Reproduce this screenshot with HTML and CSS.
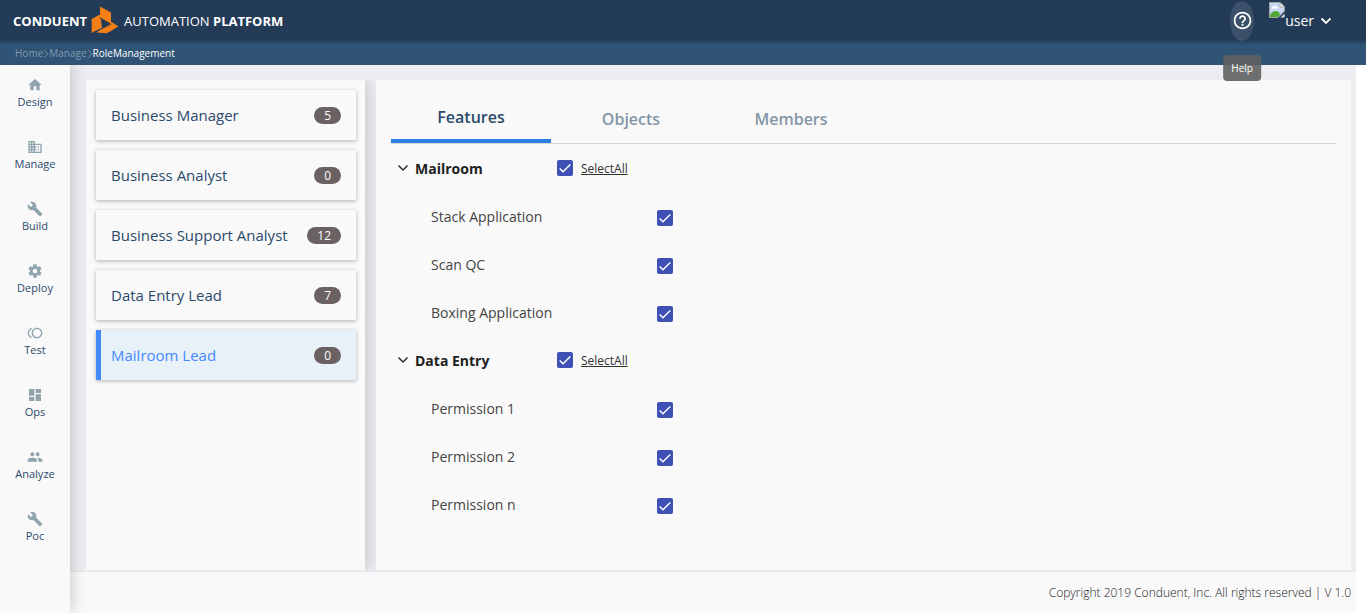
FILE: index.html
```html
<!DOCTYPE html>
<html lang="en">
<head>
<meta charset="utf-8">
<title>Role Management</title>
<link rel="stylesheet" href="styles.css">
</head>
<body>
<header class="topbar">
  <a class="brand" href="#">
    <span class="brand-name">CONDUENT</span>
    <svg class="brand-mark" viewBox="0 0 28 28" aria-hidden="true">
      <g fill="#f57f17"><path d="M9 .5 20 6.500V18L9 11.500z"/><path d="M.7 13 9 8.500V12.500L11 14V22L.7 27z"/><path d="M11 22.500 20.500 16 27.500 20.500 16 27.300 5.500 26.500z"/></g>
      <path d="M9 12 20 18.300 11 22.500 2 26.500" fill="none" stroke="#233b57" stroke-width=".8"/>
      <path d="M10 13.500 19 18 11 22.500z" fill="#233b57"/>
    </svg>
    <span class="product">AUTOMATION <b>PLATFORM</b></span>
  </a>
  <div class="tools">
    <div class="help">
      <button class="help-button" type="button" aria-label="Help" aria-describedby="help-tip">
        <svg viewBox="0 0 24 24" width="21" height="21" fill="#fff" aria-hidden="true"><path d="M11 18h2v-2h-2v2zm1-16C6.480 2 2 6.480 2 12s4.480 10 10 10 10-4.480 10-10S17.520 2 12 2zm0 18c-4.410 0-8-3.590-8-8s3.590-8 8-8 8 3.590 8 8-3.590 8-8 8zm0-14c-2.210 0-4 1.790-4 4h2c0-1.100.9-2 2-2s2 .9 2 2c0 2-3 1.750-3 5h2c0-2.250 3-2.500 3-5 0-2.210-1.790-4-4-4z"/></svg>
      </button>
      <span class="tooltip" id="help-tip" role="tooltip">Help</span>
    </div>
    <button class="user" type="button">
      <svg class="avatar" viewBox="0 0 16 16" aria-hidden="true">
        <path d="M.5.5H11L15.500 5V9L9 15.500H.5z" fill="#c4d8f5" stroke="#a5a5a5"/>
        <path d="M11 .5V5H15.500z" fill="#fff" stroke="#a5a5a5"/>
        <path d="M3 6c0-1 1-1.500 1.500-1.300C5 3 7 3 7.500 4.500 9 4.500 9 6 8.500 6.500H3z" fill="#fff"/>
        <path d="M1 13c2-4 6-5 9-3l1 3-2 2H1z" fill="#4fa834"/>
        <path d="M15.500 11.500V15.500H11.500z" fill="#ddd"/>
      </svg>
      <span>user</span>
      <svg class="caret" viewBox="0 0 12 8" width="12" height="8" aria-hidden="true"><path d="M1.500 1.500 6 6l4.500-4.500" fill="none" stroke="#fff" stroke-width="1.800"/></svg>
    </button>
  </div>
</header>
<nav class="crumbs" aria-label="Breadcrumb">
  <a href="#">Home</a><svg viewBox="0 0 6 10" width="6" height="10"><path d="M1 2l4 4-4 4"/></svg><a href="#">Manage</a><svg viewBox="0 0 6 10" width="6" height="10"><path d="M1 2l4 4-4 4"/></svg><span>RoleManagement</span>
</nav>
<div class="shell">
  <nav class="sidebar" aria-label="Main">
    <a href="#"><svg viewBox="0 0 24 24"><path d="M10 20v-6h4v6h5v-8h3L12 3 2 12h3v8z"/></svg>Design</a>
    <a href="#"><svg viewBox="0 0 24 24"><path d="M12 7V3H2v18h20V7H12zM6 19H4v-2h2v2zm0-4H4v-2h2v2zm0-4H4V9h2v2zm0-4H4V5h2v2zm4 12H8v-2h2v2zm0-4H8v-2h2v2zm0-4H8V9h2v2zm0-4H8V5h2v2zm10 12h-8v-2h2v-2h-2v-2h2v-2h-2V9h8v10zm-2-8h-2v2h2v-2zm0 4h-2v2h2v-2z"/></svg>Manage</a>
    <a href="#"><svg viewBox="0 0 24 24"><path d="M22.700 19l-9.100-9.100c.9-2.300.4-5-1.500-6.900-2-2-5-2.400-7.400-1.300L9 6 6 9 1.600 4.700C.4 7.100.9 10.100 2.900 12.100c1.900 1.900 4.600 2.400 6.900 1.500l9.100 9.100c.4.400 1 .4 1.400 0l2.300-2.300c.5-.4.5-1.100.1-1.400z"/></svg>Build</a>
    <a href="#"><svg viewBox="0 0 24 24"><path d="M19.430 12.980c.04-.32.070-.64.070-.98s-.03-.66-.07-.98l2.110-1.650c.19-.15.240-.42.120-.64l-2-3.460c-.12-.22-.39-.3-.61-.22l-2.490 1c-.52-.4-1.080-.73-1.690-.98l-.38-2.650C14.460 2.180 14.250 2 14 2h-4c-.25 0-.46.180-.49.420l-.38 2.650c-.61.250-1.170.59-1.690.98l-2.490-1c-.23-.09-.49 0-.61.220l-2 3.460c-.13.220-.07.490.12.640l2.110 1.650c-.04.320-.07.650-.07.980s.03.660.07.980l-2.110 1.650c-.19.150-.24.420-.12.640l2 3.460c.12.220.39.300.61.220l2.490-1c.52.400 1.080.730 1.690.980l.38 2.650c.03.240.24.420.49.420h4c.25 0 .46-.18.490-.42l.38-2.650c.61-.25 1.170-.59 1.690-.98l2.490 1c.23.090.49 0 .61-.22l2-3.460c.12-.22.070-.49-.12-.64l-2.110-1.650zM12 15.500c-1.930 0-3.500-1.570-3.500-3.500s1.570-3.500 3.500-3.500 3.500 1.570 3.500 3.500-1.570 3.500-3.500 3.500z"/></svg>Deploy</a>
    <a href="#"><svg viewBox="0 0 24 24"><path d="M15 4c-4.420 0-8 3.580-8 8s3.580 8 8 8 8-3.580 8-8-3.580-8-8-8zm0 14c-3.310 0-6-2.690-6-6s2.690-6 6-6 6 2.690 6 6-2.690 6-6 6zM3 12c0-2.610 1.670-4.830 4-5.650V4.260C3.550 5.150 1 8.270 1 12s2.550 6.850 6 7.740v-2.090c-2.330-.82-4-3.040-4-5.650z"/></svg>Test</a>
    <a href="#"><svg viewBox="0 0 24 24"><path d="M3 13h8V3H3v10zm0 8h8v-6H3v6zm10 0h8V11h-8v10zm0-18v6h8V3h-8z"/></svg>Ops</a>
    <a href="#"><svg viewBox="0 0 24 24"><path d="M16 11c1.660 0 2.990-1.340 2.990-3S17.660 5 16 5s-3 1.340-3 3 1.340 3 3 3zm-8 0c1.660 0 2.990-1.340 2.990-3S9.660 5 8 5 5 6.340 5 8s1.340 3 3 3zm0 2c-2.330 0-7 1.170-7 3.500V19h14v-2.500c0-2.330-4.670-3.500-7-3.500zm8 0c-.29 0-.62.020-.97.050 1.160.84 1.970 1.970 1.970 3.450V19h6v-2.500c0-2.330-4.670-3.500-7-3.500z"/></svg>Analyze</a>
    <a href="#"><svg viewBox="0 0 24 24"><path d="M22.700 19l-9.100-9.100c.9-2.300.4-5-1.500-6.900-2-2-5-2.400-7.400-1.300L9 6 6 9 1.600 4.700C.4 7.100.9 10.100 2.900 12.100c1.900 1.900 4.600 2.400 6.900 1.500l9.100 9.100c.4.400 1 .4 1.400 0l2.300-2.300c.5-.4.5-1.100.1-1.400z"/></svg>Poc</a>
  </nav>
  <div class="page">
    <main class="workspace">
      <section class="roles" aria-label="Roles">
        <button class="role" type="button"><span>Business Manager</span><span class="count">5</span></button>
        <button class="role" type="button"><span>Business Analyst</span><span class="count">0</span></button>
        <button class="role" type="button"><span>Business Support Analyst</span><span class="count">12</span></button>
        <button class="role" type="button"><span>Data Entry Lead</span><span class="count">7</span></button>
        <button class="role selected" type="button"><span>Mailroom Lead</span><span class="count">0</span></button>
      </section>
      <section class="details">
        <div class="tabs" role="tablist">
          <button class="tab active" role="tab" aria-selected="true" type="button">Features</button>
          <button class="tab" role="tab" aria-selected="false" type="button">Objects</button>
          <button class="tab" role="tab" aria-selected="false" type="button">Members</button>
        </div>
        <div class="group">
          <div class="group-head">
            <button class="toggle" type="button" aria-expanded="true"><svg viewBox="0 0 12 8" width="12" height="8"><path d="M1.500 1.500 6 6l4.500-4.500"/></svg>Mailroom</button>
            <label class="select-all"><input class="check" type="checkbox" checked><span>SelectAll</span></label>
          </div>
          <div class="feature"><label for="f1">Stack Application</label><input class="check" id="f1" type="checkbox" checked></div>
          <div class="feature"><label for="f2">Scan QC</label><input class="check" id="f2" type="checkbox" checked></div>
          <div class="feature"><label for="f3">Boxing Application</label><input class="check" id="f3" type="checkbox" checked></div>
        </div>
        <div class="group">
          <div class="group-head">
            <button class="toggle" type="button" aria-expanded="true"><svg viewBox="0 0 12 8" width="12" height="8"><path d="M1.500 1.500 6 6l4.500-4.500"/></svg>Data Entry</button>
            <label class="select-all"><input class="check" type="checkbox" checked><span>SelectAll</span></label>
          </div>
          <div class="feature"><label for="f4">Permission 1</label><input class="check" id="f4" type="checkbox" checked></div>
          <div class="feature"><label for="f5">Permission 2</label><input class="check" id="f5" type="checkbox" checked></div>
          <div class="feature"><label for="f6">Permission n</label><input class="check" id="f6" type="checkbox" checked></div>
        </div>
      </section>
    </main>
    <footer class="footer">Copyright 2019 Conduent, Inc. All rights reserved | V 1.0</footer>
  </div>
</div>
</body>
</html>
```
FILE: styles.css
```css
* { box-sizing: border-box; }
body {
  margin: 0;
  min-height: 100vh;
  display: flex;
  flex-direction: column;
  background: #fff;
  color: #212121;
  font-family: "Open Sans", sans-serif;
  font-size: 14px;
}
button { font: inherit; color: inherit; border: 0; padding: 0; background: none; }
a { color: inherit; text-decoration: none; }

.topbar {
  height: 41px;
  display: flex;
  align-items: center;
  justify-content: space-between;
  padding: 0 34px 0 13px;
  background: #233b57;
  color: #fff;
  box-shadow: 0 1px 3px rgba(0, 0, 0, .3);
  position: relative;
}
.brand { display: flex; align-items: center; font-size: 13px; }
.brand-name { font-weight: 700; }
.brand-mark { width: 28px; height: 28px; margin: 0 5px 2px 4px; }
.tools { display: flex; align-items: center; gap: 15px; }
.help { position: relative; }
.help-button {
  display: flex;
  align-items: center;
  justify-content: center;
  width: 24px;
  height: 40px;
  border-radius: 50%;
  background: #3b5069;
}
.help-button svg { flex: none; }
.tooltip {
  position: absolute;
  top: 54px;
  left: 50%;
  transform: translateX(-50%);
  padding: 6px 8px;
  border-radius: 4px;
  background: rgba(97, 97, 97, .9);
  font-size: 10px;
  line-height: 14px;
}
.user { display: flex; align-items: center; height: 40px; }
.avatar { width: 16px; height: 16px; margin-top: 1px; align-self: flex-start; }
.user .caret { margin-left: 6px; }

.crumbs {
  height: 24px;
  display: flex;
  align-items: center;
  padding: 0 15px;
  background: #2f5475;
  color: #8299ae;
  font-size: 10px;
}
.crumbs svg { fill: none; stroke: #71879b; }
.crumbs span { color: #fff; }

.shell { flex: 1; display: flex; }
.sidebar {
  width: 70px;
  flex: none;
  padding-top: 8px;
  background: #f9f9f9;
  box-shadow: 1px 0 15px rgba(0, 0, 0, .2);
  clip-path: inset(0 -16px 0 0);
  z-index: 1;
}
.sidebar a {
  display: flex;
  flex-direction: column;
  align-items: center;
  gap: 1px;
  height: 62px;
  padding-top: 4px;
  color: #2b4a6b;
  font-size: 11px;
  line-height: 16px;
}
.sidebar svg { width: 16px; height: 16px; fill: #90a4ae; }
.page { flex: 1; display: flex; flex-direction: column; margin-right: 10px; }
.workspace {
  flex: 1;
  display: flex;
  gap: 11px;
  padding: 15px 5px 1px 16px;
  background: #ecedf1;
}
.roles {
  width: 279px;
  flex: none;
  display: flex;
  flex-direction: column;
  gap: 10px;
  padding: 10px 9px 10px 10px;
  background: #f9f9f9;
  box-shadow: 1px 0 15px rgba(0, 0, 0, .2);
  clip-path: inset(0 -11px 0 0);
}
.role {
  height: 50px;
  display: flex;
  align-items: center;
  justify-content: space-between;
  padding: 0 15px;
  background: #f9f9f9;
  box-shadow: 0 1px 4px rgba(0, 0, 0, .3);
  color: #2b4a6b;
  font-size: 15px;
}
.role.selected {
  padding-left: 10px;
  border-left: 5px solid #448aff;
  background: #e8f0f8;
  color: #448aff;
}
.count {
  padding: 0 10px;
  border-radius: 9px;
  background: #696162;
  color: #fff;
  font-size: 12px;
  line-height: 17px;
}
.details { flex: 1; padding: 15px; background: #f9f9f9; }
.tabs { display: flex; height: 49px; border-bottom: 1px solid #d5d8da; }
.tab { width: 160px; color: #8496a6; font-size: 16px; font-weight: 600; }
.tab.active { border-bottom: 4px solid #2c80df; color: #2b4a6b; }
.group-head { height: 48px; display: flex; align-items: center; padding-left: 6px; }
.toggle { display: flex; align-items: center; gap: 6px; width: 160px; font-weight: 700; }
.toggle svg { fill: none; stroke: #212121; stroke-width: 1.3; }
.select-all { display: flex; align-items: center; gap: 8px; font-size: 12px; color: #333; }
.select-all span { text-decoration: underline; }
.feature { height: 48px; display: flex; align-items: center; padding-left: 40px; color: #444; }
.feature label { width: 226px; }
.feature .check { margin-top: 4px; }
.check {
  appearance: none;
  width: 16px;
  height: 16px;
  margin: 0;
  border: 2px solid #757575;
  border-radius: 2px;
}
.check:checked {
  border: 0;
  background: #3f51b5 url("data:image/svg+xml,%3Csvg xmlns='http://www.w3.org/2000/svg' viewBox='0 0 24 24'%3E%3Cpath fill='none' stroke='white' stroke-width='2.2' d='M4 12.700L9 17.700 20 6.700'/%3E%3C/svg%3E") center / 16px;
}
.footer {
  display: flex;
  align-items: center;
  justify-content: flex-end;
  height: 42px;
  padding-right: 5px;
  border-top: 1px solid #e3e6ec;
  background: #f9f9f9;
  font-size: 12px;
  font-weight: 300;
}
```
